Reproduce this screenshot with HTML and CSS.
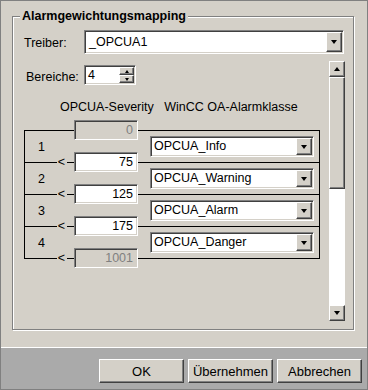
FILE: index.html
```html
<!DOCTYPE html>
<html lang="de">
<head>
    <meta charset="UTF-8">
    <meta name="viewport" content="width=device-width, initial-scale=1.0">
    <title>Alarmgewichtungsmapping</title>
    <link rel="stylesheet" href="styles.css">
</head>
<body>
    <div class="window">
        <div class="main">
            <div class="group">
                <div class="group-title">Alarmgewichtungsmapping</div>

                <div class="driver-row">
                    <label class="lbl-driver">Treiber:</label>
                    <div class="combo combo-driver">
                        <span class="combo-text">_OPCUA1</span>
                        <span class="combo-btn"><i class="arrow-down"></i></span>
                    </div>
                </div>

                <div class="scroll-area">
                    <div class="scroll-content">
                        <div class="range-row">
                            <label class="lbl-range">Bereiche:</label>
                            <div class="spin">
                                <span class="spin-text">4</span>
                                <span class="spin-btns">
                                    <span class="spin-btn"><i class="arrow-up small"></i></span>
                                    <span class="spin-btn"><i class="arrow-down small"></i></span>
                                </span>
                            </div>
                        </div>

                        <div class="headers">
                            <span class="h-sev">OPCUA-Severity</span>
                            <span class="h-class">WinCC OA-Alarmklasse</span>
                        </div>

                        <div class="mapping">
                            <div class="limits">
                                <div class="limit">
                                    <div class="wire"></div>
                                    <div class="field disabled">0</div>
                                </div>
                                <div class="band">1</div>
                                <div class="limit">
                                    <div class="wire"></div>
                                    <span class="lt">&lt;</span>
                                    <div class="stub"></div>
                                    <div class="field">75</div>
                                </div>
                                <div class="band">2</div>
                                <div class="limit">
                                    <div class="wire"></div>
                                    <span class="lt">&lt;</span>
                                    <div class="stub"></div>
                                    <div class="field">125</div>
                                </div>
                                <div class="band">3</div>
                                <div class="limit">
                                    <div class="wire"></div>
                                    <span class="lt">&lt;</span>
                                    <div class="stub"></div>
                                    <div class="field">175</div>
                                </div>
                                <div class="band">4</div>
                                <div class="limit">
                                    <div class="wire"></div>
                                    <span class="lt">&lt;</span>
                                    <div class="stub"></div>
                                    <div class="field disabled">1001</div>
                                </div>
                            </div>

                            <div class="classes">
                                <div class="cell">
                                    <div class="combo combo-class">
                                        <span class="combo-text">OPCUA_Info</span>
                                        <span class="combo-btn"><i class="arrow-down"></i></span>
                                    </div>
                                </div>
                                <div class="cell">
                                    <div class="combo combo-class">
                                        <span class="combo-text">OPCUA_Warning</span>
                                        <span class="combo-btn"><i class="arrow-down"></i></span>
                                    </div>
                                </div>
                                <div class="cell">
                                    <div class="combo combo-class">
                                        <span class="combo-text">OPCUA_Alarm</span>
                                        <span class="combo-btn"><i class="arrow-down"></i></span>
                                    </div>
                                </div>
                                <div class="cell">
                                    <div class="combo combo-class">
                                        <span class="combo-text">OPCUA_Danger</span>
                                        <span class="combo-btn"><i class="arrow-down"></i></span>
                                    </div>
                                </div>
                            </div>
                        </div>
                    </div>

                    <div class="vscroll">
                        <div class="sb-btn"><i class="arrow-up"></i></div>
                        <div class="sb-thumb"></div>
                        <div class="sb-track"></div>
                        <div class="sb-btn"><i class="arrow-down"></i></div>
                    </div>
                </div>
            </div>
        </div>

        <div class="footer">
            <button class="btn">OK</button>
            <button class="btn">Übernehmen</button>
            <button class="btn">Abbrechen</button>
        </div>
    </div>
</body>
</html>
```

FILE: styles.css
```css
* {
    box-sizing: border-box;
}
body {
    margin: 0;
    font-family: "Liberation Sans", Arial, sans-serif;
    font-size: 12.5px;
    color: #000;
}
.window {
    width: 368px;
    height: 390px;
    border: 1px solid #808080;
    background: #d4d0c8;
}
.main {
    height: 347px;
    border-bottom: 1px solid #fff;
    padding: 15px 13px 0 11px;
}

/* group box */
.group {
    height: 314px;
    border: 1px solid #808080;
    box-shadow: inset 1px 1px 0 #fff, 1px 1px 0 #fff;
    padding: 0 8px 0 11px;
}
.group-title {
    width: fit-content;
    margin: -8px 0 0 -4px;
    padding: 0 2px;
    background: #d4d0c8;
    font-weight: bold;
    line-height: 15px;
}

/* bevels */
.sunken {
    border: 1px solid;
}
.combo, .field, .spin {
    border: 1px solid;
    border-color: #808080 #fff #fff #808080;
    box-shadow: inset 1px 1px 0 #404040, inset -1px -1px 0 #d4d0c8;
}
.combo-btn, .spin-btn, .sb-btn, .sb-thumb, .btn {
    background: #d4d0c8;
    border: 1px solid;
    border-color: #fff #404040 #404040 #fff;
    box-shadow: inset -1px -1px 0 #808080;
}

.arrow-down, .arrow-up {
    display: block;
    width: 1px;
    height: 0;
    border-left: 3px solid transparent;
    border-right: 3px solid transparent;
}
.arrow-down {
    border-top: 4px solid #000;
}
.arrow-up {
    border-bottom: 4px solid #000;
}
.arrow-down.small, .arrow-up.small {
    border-left-width: 2px;
    border-right-width: 2px;
}
.arrow-down.small {
    border-top-width: 3px;
}
.arrow-up.small {
    border-bottom-width: 3px;
}

/* combo */
.combo {
    display: flex;
    background: #fff;
    padding: 1px;
}
.combo-text {
    flex: 1;
    padding-left: 2px;
    line-height: 17px;
    white-space: nowrap;
}
.combo-btn {
    width: 16px;
    display: flex;
    align-items: center;
    justify-content: center;
}

.driver-row {
    display: flex;
    align-items: center;
    margin-top: 6px;
    height: 24px;
}
.lbl-driver {
    width: 60px;
    padding-top: 2px;
}
.combo-driver {
    width: 260px;
    height: 24px;
}
.combo-driver .combo-text {
    line-height: 20px;
    padding-left: 3px;
}

/* scroll area */
.scroll-area {
    display: flex;
    margin-top: 7px;
    height: 260px;
}
.scroll-content {
    flex: 1;
}
.vscroll {
    width: 16px;
    display: flex;
    flex-direction: column;
}
.sb-btn {
    height: 16px;
    display: flex;
    align-items: center;
    justify-content: center;
}
.sb-thumb {
    height: 112px;
}
.sb-track {
    flex: 1;
    background: #fff;
}

/* Bereiche */
.range-row {
    display: flex;
    align-items: center;
    margin-top: 4px;
    height: 20px;
}
.lbl-range {
    width: 58px;
    margin-left: 2px;
    padding-top: 3px;
}
.spin {
    width: 52px;
    height: 20px;
    display: flex;
    background: #fff;
    padding: 1px;
}
.spin-text {
    flex: 1;
    padding-left: 2px;
    line-height: 16px;
}
.spin-btns {
    width: 15px;
    display: flex;
    flex-direction: column;
}
.spin-btn {
    flex: 1;
    display: flex;
    align-items: center;
    justify-content: center;
}

.headers {
    margin-top: 15px;
    line-height: 15px;
    padding-left: 36px;
    white-space: nowrap;
}
.h-class {
    margin-left: 7px;
}

/* mapping diagram */
.mapping {
    display: flex;
    margin-top: 15px;
}
.limits {
    width: 114px;
    border-left: 1px solid #000;
}
.limit {
    display: flex;
    align-items: flex-start;
    height: 1px;
}
.wire {
    flex: 1;
    height: 1px;
    background: #000;
}
.lt {
    line-height: 12px;
    margin-top: -6px;
    padding: 0 2px 0 1px;
}
.stub {
    width: 7px;
    height: 1px;
    background: #000;
}
.field {
    width: 64px;
    height: 20px;
    margin-top: -10px;
    background: #fff;
    text-align: right;
    padding-right: 4px;
    line-height: 18px;
}
.field.disabled {
    background: #d4d0c8;
    color: #808080;
}
.band {
    height: 31px;
    line-height: 31px;
    padding: 1px 0 0 13px;
}
.classes {
    width: 182px;
    border-top: 1px solid #000;
    border-right: 1px solid #000;
}
.cell {
    height: 32px;
    border-bottom: 1px solid #000;
    padding: 5px 0 0 12px;
}
.combo-class {
    width: 164px;
    height: 21px;
}

/* buttons */
.footer {
    height: 41px;
    display: flex;
    justify-content: flex-end;
    gap: 4px;
    padding: 11px 5px 0 0;
    background: #aaaaaa;
}
.btn {
    width: 85px;
    height: 24px;
    padding: 0;
    font-family: "Liberation Sans", Arial, sans-serif;
    font-size: 13px;
    color: #000;
}
```
